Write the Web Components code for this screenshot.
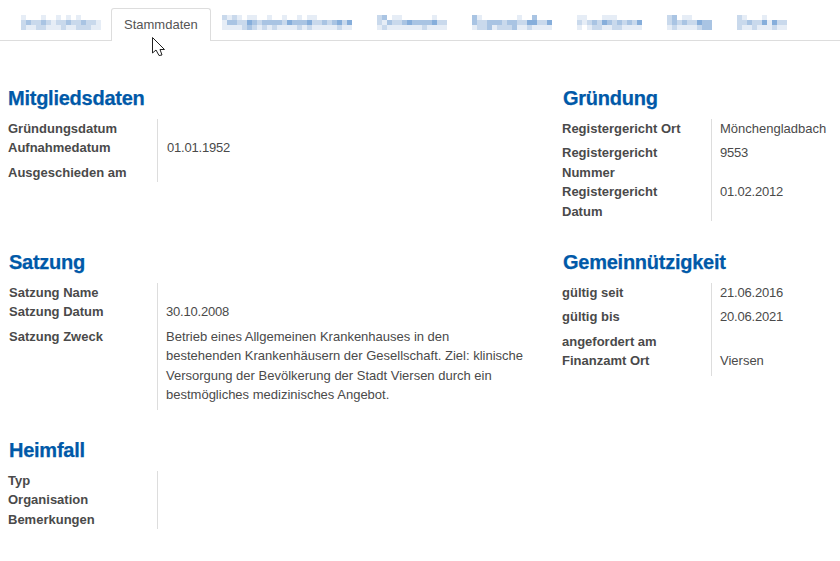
<!DOCTYPE html>
<html><head><meta charset="utf-8"><style>
html,body{margin:0;padding:0;background:#fff}
body{font-family:"Liberation Sans",Arial,sans-serif;color:#4a4a4a;width:840px;height:561px;overflow:hidden;position:relative}
</style></head><body>
<x-tabs>
  <x-mosaic slot="t" rows="a...a..a.a.a....|bcbbcbabbcbbcbba|baabbaaabaabbbaa"></x-mosaic>
  <x-tab slot="t">Stammdaten</x-tab>
  <x-mosaic slot="t" rows="baba.aa..a..a..a.aa.......|accbbdcbccccbdcccdbbcbcdbd|aaaabcbababaaaababaaaaabaa"></x-mosaic>
  <x-mosaic slot="t" rows="bc.aa......a..|bacbbcdccccdbb|abaaaaaaabaaaa"></x-mosaic>
  <x-mosaic slot="t" rows="ca.......a..c...|cbbcccbccbbddbbd|abbcabbbcaabaaaa"></x-mosaic>
  <x-mosaic slot="t" rows="aa...aaa.....|babcbdcbcbcbd|a.abbaabbaaaa"></x-mosaic>
  <x-mosaic slot="t" rows="bc.aa....|bcbcbbdcc|abaaaabcc"></x-mosaic>
  <x-mosaic slot="t" rows="ba...a....|bbcbbdadbb|baabaaabaa"></x-mosaic>
</x-tabs>
<x-main>
  <x-section title-text="Mitgliedsdaten" style="margin-bottom:26.5px;--pv:9px">
    <x-row label="Gründungsdatum"></x-row>
    <x-row label="Aufnahmedatum" date>01.01.1952</x-row>
    <x-row label="Ausgeschieden am"></x-row>
  </x-section>
  <x-section title-text="Gründung" right style="margin-bottom:26.5px">
    <x-row label="Registergericht Ort">Mönchengladbach</x-row>
    <x-row label="Registergericht Nummer" date>9553</x-row>
    <x-row label="Registergericht Datum" date>01.02.2012</x-row>
  </x-section>
  <x-section title-text="Satzung" shift>
    <x-row label="Satzung Name"></x-row>
    <x-row label="Satzung Datum" date>30.10.2008</x-row>
    <x-row label="Satzung Zweck">Betrieb eines Allgemeinen Krankenhauses in den<br>bestehenden Krankenhäusern der Gesellschaft. Ziel: klinische<br>Versorgung der Bevölkerung der Stadt Viersen durch ein<br>bestmögliches medizinisches Angebot.</x-row>
  </x-section>
  <x-section title-text="Gemeinnützigkeit" right>
    <x-row label="gültig seit" date>21.06.2016</x-row>
    <x-row label="gültig bis" date>20.06.2021</x-row>
    <x-row label="angefordert am"></x-row>
    <x-row label="Finanzamt Ort">Viersen</x-row>
  </x-section>
  <x-section title-text="Heimfall" h-shift>
    <x-row label="Typ"></x-row>
    <x-row label="Organisation"></x-row>
    <x-row label="Bemerkungen"></x-row>
  </x-section>
</x-main>
<x-cursor></x-cursor>
<script>
class XTabs extends HTMLElement{constructor(){super();this.attachShadow({mode:'open'}).innerHTML=`<style>
:host{display:flex;height:40px;border-bottom:1px solid #ddd;padding-left:21px}
slot{display:flex;gap:25px;align-items:flex-start}
</style><slot name="t"></slot>`}}
class XTab extends HTMLElement{constructor(){super();this.attachShadow({mode:'open'}).innerHTML=`<style>
:host{display:block;box-sizing:border-box;height:33px;margin:8px -14px 0 -15px;padding:0 12px;line-height:32px;font-size:13px;color:#555;background:#fff;border:1px solid #ddd;border-bottom:0;border-radius:3px 3px 0 0}
</style><slot></slot>`}}
class XMosaic extends HTMLElement{constructor(){super();const rows=this.getAttribute('rows').split('|');
const col={a:'#e6edf6',b:'#c9d9ec',c:'#a9c4e3',d:'#86aedb'};let s='';const w=rows[0].length*5;
rows.forEach((r,y)=>{[...r].forEach((c,x)=>{if(c!='.')s+=`<rect x="${x*5}" y="${y*5}" width="5" height="5" fill="${col[c]}"/>`})});
this.attachShadow({mode:'open'}).innerHTML=`<style>:host{display:block;margin-top:15px;height:15px}svg{display:block}</style><svg width="${w}" height="15" shape-rendering="crispEdges">${s}</svg>`}}
class XMain extends HTMLElement{constructor(){super();this.attachShadow({mode:'open'}).innerHTML=`<style>
:host{display:grid;grid-template-columns:554px 1fr;padding:42.9px 0 0 8px;align-items:start}
</style><slot></slot>`}}
class XSection extends HTMLElement{constructor(){super();const t=this.getAttribute('title-text');
const r=this.hasAttribute('right'),sh=this.hasAttribute('shift'),hs=this.hasAttribute('h-shift');
this.attachShadow({mode:'open'}).innerHTML=`<style>
:host{display:block;margin-bottom:26px;${sh?'padding-left:1px;--w:148px;':''}}
h2{margin:0 0 7px;font:bold 20px/28px "Liberation Sans",Arial,sans-serif;letter-spacing:-.25px;-webkit-text-stroke:.25px #0059a8;color:#0059a8;${hs||r?'padding-left:1px;':''}}
</style><h2>${t}</h2><slot></slot>`}}
class XRow extends HTMLElement{constructor(){super();const l=this.getAttribute('label');const d=this.hasAttribute('date');
this.attachShadow({mode:'open'}).innerHTML=`<style>
:host{display:flex;font:13px/19.5px "Liberation Sans",Arial,sans-serif}
.l{width:var(--w,149px);flex:none;font-weight:bold;color:#4a4a4a;box-sizing:border-box;padding-right:10px}
.v{flex:1;border-left:1px solid #ddd;padding-left:var(--pv,8px);color:#4a4a4a;${d?'letter-spacing:-.2px;':''}}
.v.f{padding-bottom:5px}
</style><div class="l">${l}</div><div class="v ${this.textContent.trim()?'f':''}"><slot></slot></div>`}}
class XCursor extends HTMLElement{constructor(){super();this.attachShadow({mode:'open'}).innerHTML=`<style>
:host{position:absolute;left:152px;top:37px;width:14px;height:20px}svg{display:block}
</style><svg width="14" height="20" viewBox="0 0 14 20"><path d="M.5 .5V16L4 13L7 18.5L10 18L8 12.5H12.5Z" fill="#fff" stroke="#222" stroke-width="1"/></svg>`}}
for(const [n,c] of Object.entries({'x-tabs':XTabs,'x-tab':XTab,'x-mosaic':XMosaic,'x-main':XMain,'x-section':XSection,'x-row':XRow,'x-cursor':XCursor}))customElements.define(n,c);
</script>
</body></html>
